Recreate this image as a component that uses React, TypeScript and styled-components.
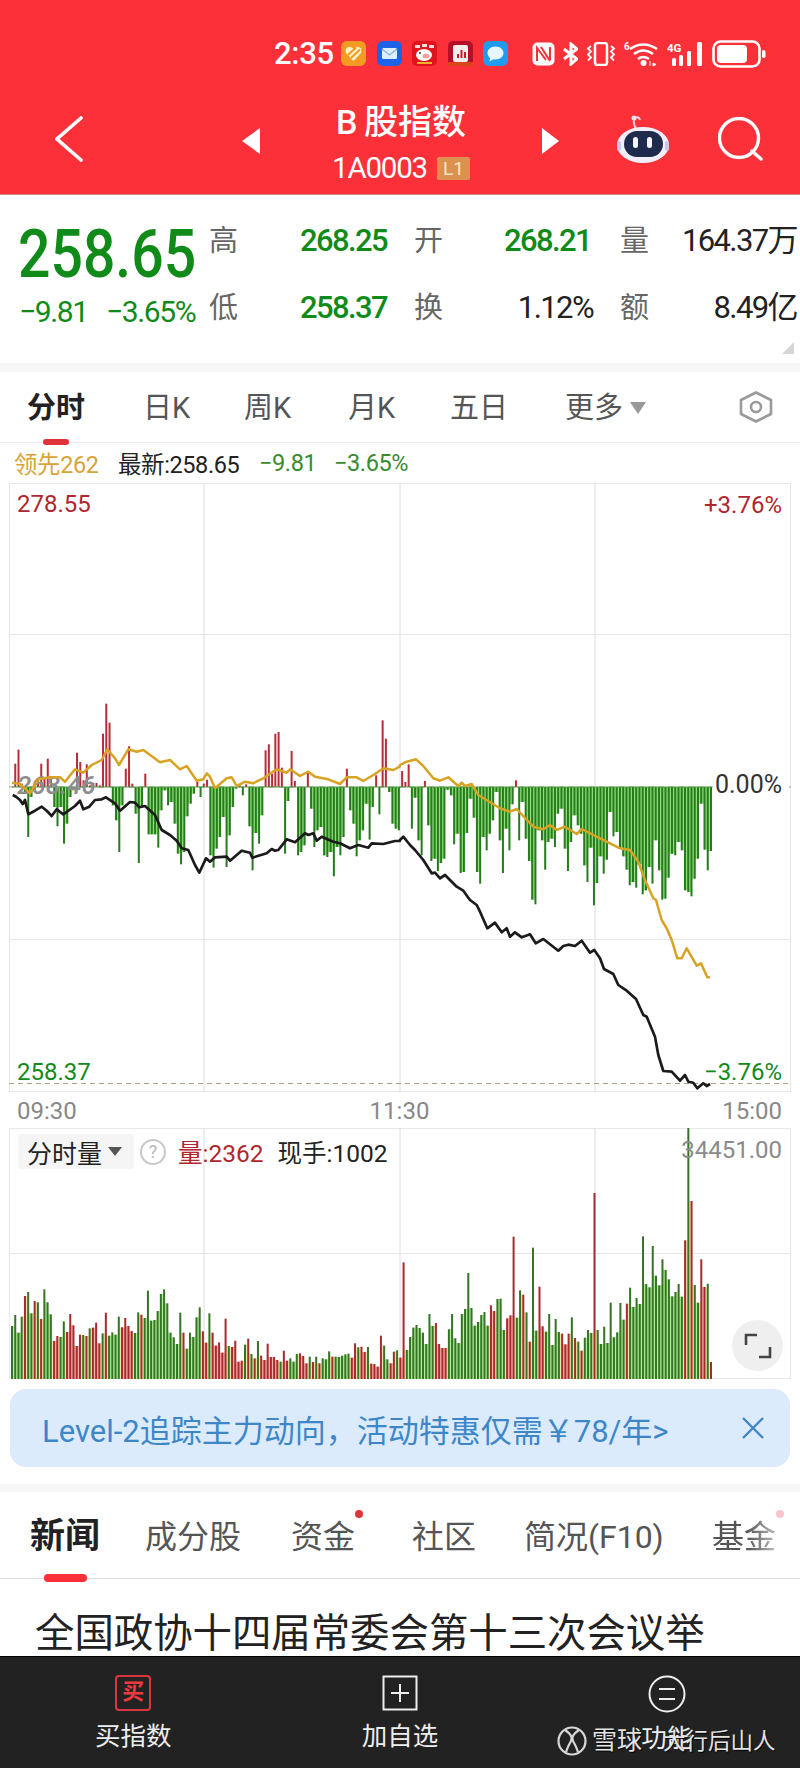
import React from "react";
import styled, { createGlobalStyle } from "styled-components";

const Global = createGlobalStyle`
  html, body { margin: 0; padding: 0; background: #fff; }
  * { box-sizing: border-box; }
  body { font-family: Roboto, "Noto Sans CJK SC", sans-serif; }
`;

const RED = "#fb3038";
const GREEN = "#108a18";

const Page = styled.div`
  width: 800px; height: 1768px; overflow: hidden; display: flex; flex-direction: column; background: #fff; position: relative;
`;
const Header = styled.header`
  height: 195px; background: ${RED}; border-bottom: 1px solid #d9868a; display: flex; flex-direction: column; flex: none;
`;
const StatusBar = styled.div`
  height: 39px; margin-top: 34px; display: flex; align-items: center; padding-left: 274px; color: #fff; flex: none;
`;
const Time = styled.span`
  font-size: 31px; width: 67px; line-height: 28px; letter-spacing: -0.3px; font-weight: 500;
`;
const AppIcons = styled.div`
  display: flex; gap: 10.5px; width: 191px;
`;
const SysIcons = styled.div`
  display: flex; align-items: center; gap: 8px;
`;
const NavRow = styled.div`
  display: flex; align-items: center; padding-left: 55px; margin-top: 24px; height: 90px; color: #fff; flex: none;
`;
const Arrow = styled.div<{ $dir: "l" | "r" }>`
  width: 0; height: 0; border-top: 13px solid transparent; border-bottom: 13px solid transparent;
  ${p => (p.$dir === "l" ? "border-right: 18px solid #fff; margin-left: 159px;" : "border-left: 17px solid #fff;")}
  margin-top: -2px; flex: none;
`;
const TitleBox = styled.div`
  width: 282px; display: flex; flex-direction: column; align-items: center;
`;
const Title = styled.div`
  font-size: 34px; line-height: 40px; font-weight: 500; word-spacing: -2px;
`;
const CodeRow = styled.div`
  display: flex; align-items: center; gap: 10px; margin-top: 12px; font-size: 29.5px; line-height: 28px; letter-spacing: -1.2px;
`;
const LevelBadge = styled.span`
  width: 33px; height: 23px; background: #dc9150; color: #f8e6c8; font-size: 19px; line-height: 23px; text-align: center; border-radius: 2px; letter-spacing: 0;
`;
const Quote = styled.section`
  height: 168px; padding: 16px 3px 0 19px; display: grid; flex: none; position: relative;
  grid-template-columns: 190px 30px 175px 30px 176px 30px 147px; grid-template-rows: 60px 60px; row-gap: 7px;
`;
const PriceCol = styled.div`
  grid-row: 1 / 3; display: flex; flex-direction: column; margin-top: 14px;
`;
const BigPrice = styled.div`
  font-size: 66px; line-height: 60px; font-weight: 500; color: ${GREEN}; transform: scaleX(0.865); transform-origin: 0 50%; white-space: nowrap; margin-left: -1px;
`;
const Changes = styled.div`
  display: flex; margin-top: 12px; font-size: 30px; line-height: 30px; color: ${GREEN}; letter-spacing: -1.4px; white-space: nowrap;
  span:first-child { width: 87px; }
`;
const QLabel = styled.div`
  font-size: 29px; color: #666; display: flex; align-items: center; line-height: 60px;
`;
const QValue = styled.div<{ $dark?: boolean; $pad?: number }>`
  font-size: 31px; font-weight: ${p => (p.$dark ? 400 : 500)}; color: ${p => (p.$dark ? "#222" : GREEN)}; text-align: right; line-height: 60px;
  padding-right: ${p => p.$pad ?? 0}px; letter-spacing: -1.6px; white-space: nowrap;
`;
const Corner = styled.div`
  position: absolute; right: 6px; bottom: 9px; width: 0; height: 0;
  border-left: 12px solid transparent; border-bottom: 12px solid #d5d5d5;
`;
const Gap = styled.div`
  height: 9px; background: #f7f7f7; flex: none;
`;
const PeriodTabs = styled.nav`
  height: 71px; border-bottom: 1px solid #ececec; display: grid; flex: none; align-items: center; position: relative; padding-left: 27px;
  grid-template-columns: 116px 101px 104px 102px 115px 174px 40px;
`;
const PeriodTab = styled.div<{ $active?: boolean }>`
  font-size: 29px; line-height: 40px; color: ${p => (p.$active ? "#222" : "#555")}; font-weight: ${p => (p.$active ? 700 : 400)};
  justify-self: start; position: relative; margin-top: 2px; display: flex; align-items: center; white-space: nowrap;
  ${p => p.$active ? `&::after { content: ""; position: absolute; left: 16px; right: 16px; bottom: -17px; height: 6px; border-radius: 3px; background: #e0343c; }` : ""}
`;
const Caret = styled.i`
  width: 0; height: 0; border-left: 8px solid transparent; border-right: 8px solid transparent; border-top: 12px solid #999; margin-left: 7px;
`;
const Legend = styled.div`
  height: 40px; display: flex; align-items: center; padding-left: 14px; font-size: 23.5px; flex: none; letter-spacing: -0.4px; white-space: nowrap;
`;
const LegendItem = styled.span<{ $c: string; $w: number }>`
  color: ${p => p.$c}; width: ${p => p.$w}px;
`;
const ChartPanel = styled.div<{ $h: number }>`
  position: relative; width: 782px; height: ${p => p.$h}px; margin-left: 9px; flex: none;
  svg { display: block; }
`;
const ChartLabel = styled.span<{ $c: string; $top: number; $left?: number; $right?: number; $bg?: boolean }>`
  position: absolute; top: ${p => p.$top}px; font-size: ${p => (p.$bg ? 25 : 24)}px; line-height: 26px; color: ${p => p.$c};
  ${p => (p.$left !== undefined ? `left: ${p.$left}px;` : "")}
  ${p => (p.$right !== undefined ? `right: ${p.$right}px;` : "")}
  ${p => (p.$bg ? "background: #fff; padding: 0 2px;" : "")}
`;
const TimeAxis = styled.div`
  height: 36px; display: flex; justify-content: space-between; align-items: center; padding: 2px 18px 0 17px; color: #888; font-size: 24px; flex: none;
`;
const VolHead = styled.div`
  position: absolute; left: 9px; top: 6px; display: flex; align-items: center; font-size: 25px; color: #222; white-space: nowrap;
`;
const Chip = styled.div`
  width: 116px; height: 35px; background: #f5f5f5; border-radius: 4px; display: flex; align-items: center; padding-left: 9px;
  i { width: 0; height: 0; margin-left: 6px; border-left: 7px solid transparent; border-right: 7px solid transparent; border-top: 9px solid #555; }
`;
const Help = styled.div`
  width: 26px; height: 26px; border-radius: 50%; border: 2px solid #c8c8c8; color: #b5b5b5; font-size: 18px; line-height: 22px; text-align: center; margin: 0 12px 0 6px;
`;
const VolStat = styled.span<{ $c: string }>`
  color: ${p => p.$c}; font-size: 24.5px; margin-right: 14px;
`;
const Fullscreen = styled.div`
  position: absolute; left: 723px; top: 192px; width: 51px; height: 51px; border-radius: 50%; background: #efefef;
  display: flex; align-items: center; justify-content: center;
`;
const Banner = styled.div`
  margin: 10px 10px 0; height: 78px; border-radius: 16px; background: #dcebfb; color: #3d87c9; display: flex; align-items: center;
  justify-content: space-between; padding: 0 25px 0 32px; font-size: 31px; flex: none; white-space: nowrap;
`;
const Gap2 = styled(Gap)`
  margin-top: 17px; height: 8px;
`;
const NewsTabs = styled.nav`
  height: 87px; border-bottom: 1px solid #ddd; display: grid; align-items: center; flex: none; padding-left: 30px;
  grid-template-columns: 115px 146px 121px 112px 188px 80px;
`;
const NewsTab = styled.div<{ $active?: boolean; $dot?: "red" | "pink" }>`
  position: relative; justify-self: start; white-space: nowrap; font-size: ${p => (p.$active ? 35 : 32)}px; font-weight: ${p => (p.$active ? 700 : 400)};
  color: ${p => (p.$active ? "#222" : "#555")}; line-height: 44px; margin-top: 4px;
  ${p => p.$active ? `&::after { content: ""; position: absolute; left: 14px; right: 13px; bottom: -23px; height: 8px; border-radius: 4px; background: ${RED}; }` : ""}
  ${p => p.$dot ? `&::before { content: ""; position: absolute; right: -8px; top: -5px; width: 8px; height: 8px; border-radius: 50%; background: ${p.$dot === "red" ? "#e0343c" : "#f6c6cc"}; }` : ""}
`;
const FadeText = styled.span`
  display: block; -webkit-mask-image: linear-gradient(90deg, #000 55%, rgba(0,0,0,.4)); mask-image: linear-gradient(90deg, #000 55%, rgba(0,0,0,.4));
`;
const Headline = styled.h1`
  margin: 0; height: 77px; padding: 31px 0 0 35px; font-size: 39.4px; line-height: 48px; font-weight: 400; color: #222; white-space: nowrap; overflow: hidden; flex: none;
`;
const BottomBar = styled.footer`
  flex: 1; background: #222; border-top: 1px solid #000; display: grid; grid-template-columns: repeat(3, 1fr); position: relative;
`;
const BarItem = styled.div`
  display: flex; flex-direction: column; align-items: center; padding-top: 18px; color: #eee; font-size: 25.5px; line-height: 34px;
  span { margin-top: 8px; }
`;
const BuyIcon = styled.div`
  width: 36px; height: 36px; border: 2.5px solid #d8383c; border-radius: 4px; color: #f0383f; font-size: 22px; font-weight: 700; line-height: 30px; text-align: center;
`;
const Watermark = styled.div`
  position: absolute; left: 557px; top: 68px; display: flex; align-items: center; color: #e4e4e4; font-size: 22.5px; line-height: 32px; text-shadow: 1px 1px 1px #000;
  svg { margin-right: 5px; }
  b { font-weight: 400; font-size: 25px; margin-right: 21px; }
`;

function pts(s: string, ox: number, oy: number): string {
  return s.trim().split(/\s+/).map(p => {
    const [a, b] = p.split(",").map(Number);
    return `${(ox + a / 3).toFixed(1)},${(oy + b / 3).toFixed(1)}`;
  }).join(" ");
}

const BLACK = [
  pts("38,345 48,350 60,360 68,372 75,360 85,403 105,392 125,380 140,392 155,408 170,388 190,403 225,378 240,362 250,388 268,380 285,360 305,358 318,352 345,370 360,392 390,366 405,368 418,382 435,378 465,405 485,450 510,465 530,482 545,505 565,510 585,555 598,578 618,535 630,545 645,532 680,530 690,542 725,512 750,518 757,533 800,520 815,507 825,512 835,510 860,478 885,487 915,460 925,465 940,460 950,482 965,470 1000,485 1020,490 1050,505 1075,495 1105,503 1115,490 1150,492 1185,483 1199,483", 0, 680),
  pts("0,480 10,470 30,495 45,510 70,540 95,580 105,578 120,595 135,585 170,620 190,632 210,660 230,675", 400, 680),
  pts("240,35 262,85 285,68 305,97 320,85 330,110 345,97 365,112 378,107 390,103 407,130 430,117 475,152 490,138 505,134 525,138 545,122 570,158 583,150 600,175 612,207 640,222 655,255 680,272 708,297 730,345 740,350 765,410 775,465 790,513 815,515 840,542 855,525 865,545 880,548 892,565 910,550 920,558 930,552", 400, 900),
].join(" ");

const YELLOW = [
  pts("36,308 60,312 90,340 115,298 150,292 180,292 195,305 225,268 250,278 275,255 305,240 322,208 345,235 357,255 385,208 410,215 430,210 480,247 510,240 540,268 560,258 590,302 610,298 620,280 630,290 645,325 680,295 695,292 710,318 735,305 760,310 775,302 790,295 830,268 860,278 870,268 900,288 925,275 945,290 985,298 1020,312 1040,292 1070,292 1090,303 1120,285 1150,265 1180,270 1199,260", 0, 680),
  pts("0,255 20,245 48,238 70,258 100,295 120,302 145,292 175,318 185,308 195,318 215,312 235,345 300,385 330,395 350,387 400,440 430,448 450,435 470,450 495,440 530,462 545,447 600,475 630,490 660,505 690,510 715,545 735,600 760,655", 400, 680),
  pts("768,0 785,60 800,85 815,120 832,175 845,175 860,145 890,197 903,190 922,232 930,232", 400, 900),
].join(" ");

const MACD = [0,70,112,10,-20,-150,-30,-10,20,70,25,85,25,-60,-118,-60,-170,-110,-30,-10,103,75,20,68,5,12,12,5,160,250,193,-55,-100,-195,-55,55,122,10,-80,-228,-60,40,-142,-142,-142,-182,-70,-10,-55,-45,-110,-200,-232,-195,-88,-50,-20,15,-30,10,22,-205,-242,-185,-150,-90,-240,-145,-60,-5,5,-25,8,-118,-250,-138,-170,-85,110,128,40,160,165,58,-200,-42,108,18,-205,-195,-175,45,-65,-180,-130,-120,-205,-210,-195,-268,-180,-205,-150,55,-70,-110,-208,-160,-130,-50,-158,-60,35,-82,200,145,-15,-110,-125,-130,48,15,68,-125,-32,-160,-205,18,-115,-222,-215,-252,-228,-215,-8,-25,-172,-140,-258,-255,-138,-35,-92,-255,-290,-150,-190,-140,-100,-15,-160,-258,-125,-190,-52,20,-160,-45,-155,-222,-338,-352,-130,-160,-248,-165,-155,-180,-80,-65,-185,-252,-165,-85,-115,-140,-235,-285,-182,-355,-288,-208,-260,-218,-75,-148,-135,-180,-208,-248,-295,-285,-302,-232,-322,-310,-240,-290,-160,-250,-338,-335,-272,-200,-205,-165,-190,-310,-315,-328,-275,-215,-50,-188,-250,-192];

const VOL_RAW = "678g 645g 698g 650g 588r 576g 640g 603r 607g 657r 568g 607g 643g 723r 708r 711g 664g 696r 642r 676r 738r 704r 705g 708r 685g 683r 668r 730r 700g 638r 707g 697g 704g 650g 682r 654r 678r 693r 699g 637g 644r 654g 572g 662g 660g 633g 582g 568g 610g 698g 712g 732g 638g 698r 746g 698g 711g 652g 622g 694r 728r 640g 698r 737r 727r 758r 656r 738g 741r 722r 785r 782r 734g 716r 762g 775r 723g 767r 780r 731r 771r 771r 780r 785g 752r 782r 775g 785g 762g 760r 768r 790r 770g 786r 770g 790r 775g 778g 754g 770r 770g 771g 767g 763g 761g 773r 730r 742g 740r 756r 741g 791r 792r 800r 707r 737g 778g 790r 755r 751g 773r 487r 750g 711g 683g 675g 684g 698g 732g 642g 678g 669r 732r 744r 744r 688g 642g 715g 729g 642g 627g 519g 624g 677g 666g 645g 636g 677g 616r 633r 597g 596g 690g 655r 646r 410r 653g 571g 584r 637g 725r 443g 692g 560r 679r 695g 642g 735g 657g 696g 701r 733r 701r 652g 714r 725g 752r 713g 690g 699g 279r 690g 732g 680g 729g 608g 712g 697g 609g 659g 611r 563g 621g 594g 612g 409g 552g 562g 438g 527g 556g 478g 510g 538g 589g 576g 552g 590g 421r 84g 303r 555g 608g 478r 561r 551g 786r";
const VOL = VOL_RAW.split(" ").map(s => ({ top: 1100 + parseInt(s) / 3, up: s.endsWith("r") }));

const X0 = 12;
const X1 = 711;
const Y0 = 787;

const MainChart = () => {
  const pitch = (X1 - X0) / (MACD.length - 1);
  return (
    <svg width={782} height={609} viewBox="9 483 782 609">
      <rect x={9.5} y={483.5} width={781} height={608} fill="none" stroke="#e6e6e6" />
      {[204, 400, 595].map(x => <line key={x} x1={x} x2={x} y1={483} y2={1092} stroke="#dcdcdc" />)}
      {[634.5, 939.5].map(y => <line key={y} x1={9} x2={791} y1={y} y2={y} stroke="#e6e6e6" />)}
      <line x1={9} x2={791} y1={Y0} y2={Y0} stroke="#999" strokeDasharray="5 5" />
      <line x1={9} x2={791} y1={1083.5} y2={1083.5} stroke="#b59a7c" strokeDasharray="5 4" />
      {MACD.slice(0, -1).map((v, i) => {
        const n = MACD[i + 1];
        if (v >= 0 || n >= 0) return null;
        const h = Math.min(-v, -n) / 3;
        return <rect key={i} x={X0 + i * pitch} y={Y0} width={pitch} height={h} fill="#8fe078" />;
      })}
      {MACD.map((v, i) => {
        const h = Math.abs(v) / 3;
        return <rect key={i} x={X0 + i * pitch - 1} y={v > 0 ? Y0 - h : Y0} width={2} height={h} fill={v > 0 ? "#b82c3a" : "#277a1e"} />;
      })}
      <line x1={X0} x2={X1} y1={Y0} y2={Y0} stroke="#4d9a3c" />
      <text x={17} y={794} fontSize={26} fontWeight={500} fill="#8d8d8d" fontStyle="italic" fontFamily="Roboto, sans-serif">268.46</text>
      <polyline points={BLACK} fill="none" stroke="#1b1b1b" strokeWidth={2.7} strokeLinejoin="round" />
      <polyline points={YELLOW} fill="none" stroke="#d8a222" strokeWidth={2.5} strokeLinejoin="round" />
    </svg>
  );
};

const VolumeChart = () => {
  const pitch = (X1 - X0) / (VOL.length - 1);
  const base = 1379;
  return (
    <svg width={782} height={251} viewBox="9 1128 782 251">
      <rect x={9.5} y={1128.5} width={781} height={250} fill="none" stroke="#e8e8e8" />
      {[204, 400, 595].map(x => <line key={x} x1={x} x2={x} y1={1128} y2={1379} stroke="#dcdcdc" />)}
      <line x1={9} x2={791} y1={1253.5} y2={1253.5} stroke="#e6e6e6" />
      {VOL.slice(0, -1).map((b, i) => {
        const n = VOL[i + 1];
        const top = Math.max(b.top, n.top);
        const fill = b.up && n.up ? "#f8b4ac" : !b.up && !n.up ? "#b2f096" : "#efe8a8";
        return <rect key={i} x={X0 + i * pitch} y={top} width={pitch} height={base - top} fill={fill} />;
      })}
      {VOL.map((b, i) => (
        <rect key={i} x={X0 + i * pitch - 1} y={b.top} width={2} height={base - b.top} fill={b.up ? "#a62a2e" : "#357426"} />
      ))}
    </svg>
  );
};

const Heart = () => (
  <svg width={25} height={25} viewBox="0 0 25 25"><rect width={25} height={25} rx={6} fill="#f59a23" />
    <path d="M12.5 20 L5 12 Q3.5 6.5 8 6 Q11 5.5 12.5 8 Q14 5.5 17 6 Q21.5 6.5 20 12 Z" fill="#fff3c8" />
    <path d="M7 14 L15 6.5 M10 17 L19 8.5" stroke="#f59a23" strokeWidth={2} /></svg>
);
const Mail = () => (
  <svg width={25} height={25} viewBox="0 0 25 25"><rect width={25} height={25} rx={6} fill="#1d63e8" />
    <rect x={5} y={7} width={15} height={11} rx={1.5} fill="#dfeeff" /><path d="M5 8 L12.5 14 L20 8" fill="none" stroke="#7eb0f5" strokeWidth={1.2} /></svg>
);
const Cartoon = () => (
  <svg width={25} height={25} viewBox="0 0 25 25"><rect width={25} height={25} rx={5} fill="#e0141c" />
    <path d="M3 4h5v3H3zM10 3h5v3h-5zM17 4h5v3h-5z" fill="#fff" opacity=".85" />
    <ellipse cx={12} cy={14} rx={8} ry={6} fill="#fff" /><ellipse cx={14} cy={15} rx={3.5} ry={2.5} fill="#f2a0a0" />
    <circle cx={8} cy={12} r={1} fill="#333" /><path d="M5 21h15v2H5z" fill="#f8b030" /></svg>
);
const Notebook = () => (
  <svg width={25} height={25} viewBox="0 0 25 25"><rect width={25} height={25} rx={5} fill="#b5102a" />
    <rect x={5} y={4} width={15} height={17} rx={2} fill="#fff" opacity=".92" />
    <path d="M9 17v-4h2v4zM12.5 17v-8h2v8zM16 17v-6h2v6z" fill="#c01f2a" /><rect y={21} width={25} height={4} fill="#d8451c" /></svg>
);
const Bubble = () => (
  <svg width={25} height={25} viewBox="0 0 25 25"><rect width={25} height={25} rx={6} fill="#1f9bf0" />
    <path d="M12.5 5.5c4.5 0 8 2.900 8 6.500s-3.500 6.500-8 6.500c-.8 0-1.500-.1-2.200-.2L6.500 20.500l.6-3.500C5.500 15.800 4.500 14 4.500 12c0-3.600 3.500-6.500 8-6.500z" fill="#e8f6ff" /></svg>
);
const Nfc = () => (
  <svg width={23} height={24} viewBox="0 0 23 24"><rect x={0.5} y={0.5} width={22} height={23} rx={5} fill="#fff" />
    <path d="M5 19V6l9 12M18 5v13M9 5l9 14" fill="none" stroke={RED} strokeWidth={2} /></svg>
);
const Bt = () => (
  <svg width={15} height={24} viewBox="0 0 15 24" fill="none" stroke="#fff" strokeWidth={3}><path d="M1 7l13 10-6 5V2l6 5L1 17" /></svg>
);
const Vibrate = () => (
  <svg width={30} height={24} viewBox="0 0 30 24" fill="none" stroke="#fff" strokeWidth={2}><rect x={9} y={1} width={12} height={22} rx={2.500} strokeWidth={2.500} />
    <path d="M5 4l-3 2.500 3 3-3 3 3 3-3 3M25 4l3 2.500-3 3 3 3-3 3 3 3" strokeWidth={1.800} /></svg>
);
const Wifi = () => (
  <svg width={35} height={26} viewBox="0 0 35 26" fill="none" stroke="#fff" strokeWidth={2.600}>
    <path d="M6 8Q19-1 33 8M10 13Q19 6 29 13M14 18Q19 14 25 18" />
    <circle cx={19.500} cy={22} r={3} fill="#fff" stroke="none" />
    <path d="M26 20v5M29 22l3 1.500-3 1.500z" strokeWidth={1} fill="#fff" />
    <text x={0} y={9} fontSize={10} fontWeight={700} fill="#fff" stroke="none" fontFamily="Roboto, sans-serif">6</text></svg>
);
const Signal = () => (
  <svg width={37} height={26} viewBox="0 0 37 26" fill="#fff">
    <text x={0} y={11} fontSize={11.500} fontWeight={700} fontFamily="Roboto, sans-serif">4G</text>
    <rect x={5} y={17} width={4} height={8} rx={1.500} /><rect x={12} y={14} width={4} height={11} rx={1.500} /><rect x={20} y={10} width={4} height={15} rx={1.500} /><rect x={30} y={1} width={5} height={24} rx={1.500} /></svg>
);
const Battery = () => (
  <svg width={54} height={28} viewBox="0 0 54 28"><rect x={1.500} y={1.500} width={46} height={25} rx={7} fill="none" stroke="#fff" strokeWidth={2.600} />
    <rect x={5} y={5} width={30} height={18} rx={4} fill="#fff" /><rect x={50} y={10} width={3.500} height={8} rx={1.700} fill="#fff" /></svg>
);
const Robot = () => (
  <svg width={53} height={48} viewBox="0 0 53 48" style={{ flex: "none", marginTop: -6 }}>
    <path d="M20 14Q16 6 19 3Q23 1 24 5" fill="none" stroke="#f0d8e8" strokeWidth={2} />
    <circle cx={18} cy={3} r={2.500} fill="#f3dfe6" />
    <ellipse cx={27} cy={30} rx={26} ry={18} fill="#f2eefc" />
    <rect x={1} y={26} width={4} height={10} rx={2} fill="#cfc6ec" /><rect x={49} y={26} width={4} height={10} rx={2} fill="#cfc6ec" />
    <rect x={8} y={16} width={39} height={26} rx={13} fill="#1f2b4d" />
    <rect x={17} y={22} width={5} height={11} rx={2.500} fill="#f4f6ff" /><rect x={31} y={22} width={5} height={11} rx={2.500} fill="#f4f6ff" />
  </svg>
);
const Search = () => (
  <svg width={46} height={44} viewBox="0 0 46 44" fill="none" stroke="#fff" strokeWidth={3.400} strokeLinecap="round" style={{ flex: "none", marginLeft: 49, marginTop: -6 }}>
    <circle cx={21} cy={21} r={19.500} /><path d="M34 34l9 8" /></svg>
);
const Back = () => (
  <svg width={28} height={46} viewBox="0 0 28 46" fill="none" stroke="#fff" strokeWidth={3.600} strokeLinecap="round" style={{ flex: "none", marginTop: -6 }}>
    <path d="M26 2L2 23l24 21" /></svg>
);
const Hex = () => (
  <svg width={34} height={32} viewBox="0 0 34 32" fill="none" stroke="#9a9a9a" strokeWidth={2.600} strokeLinejoin="round">
    <path d="M17 1.500L32 9v14l-15 7.500L2 23V9z" /><circle cx={17} cy={16} r={5} /></svg>
);

export default function App() {
  return (
    <Page>
      <Global />
      <Header>
        <StatusBar>
          <Time>2:35</Time>
          <AppIcons><Heart /><Mail /><Cartoon /><Notebook /><Bubble /></AppIcons>
          <SysIcons><Nfc /><Bt /><Vibrate /><Wifi /><Signal /><Battery /></SysIcons>
        </StatusBar>
        <NavRow>
          <Back />
          <Arrow $dir="l" />
          <TitleBox>
            <Title>B 股指数</Title>
            <CodeRow>1A0003 <LevelBadge>L1</LevelBadge></CodeRow>
          </TitleBox>
          <Arrow $dir="r" />
          <div style={{ width: 57, flex: "none" }} />
          <Robot />
          <Search />
        </NavRow>
      </Header>
      <Quote>
        <PriceCol>
          <BigPrice>258.65</BigPrice>
          <Changes><span>−9.81</span><span>−3.65%</span></Changes>
        </PriceCol>
        <QLabel>高</QLabel><QValue $pad={27}>268.25</QValue>
        <QLabel>开</QLabel><QValue $pad={29}>268.21</QValue>
        <QLabel>量</QLabel><QValue $dark>164.37万</QValue>
        <QLabel>低</QLabel><QValue $pad={27}>258.37</QValue>
        <QLabel>换</QLabel><QValue $dark $pad={27}>1.12%</QValue>
        <QLabel>额</QLabel><QValue $dark>8.49亿</QValue>
        <Corner />
      </Quote>
      <Gap />
      <PeriodTabs>
        <PeriodTab $active>分时</PeriodTab>
        <PeriodTab>日K</PeriodTab>
        <PeriodTab>周K</PeriodTab>
        <PeriodTab>月K</PeriodTab>
        <PeriodTab>五日</PeriodTab>
        <PeriodTab>更多<Caret /></PeriodTab>
        <Hex />
      </PeriodTabs>
      <Legend>
        <LegendItem $c="#d9a437" $w={104}>领先262</LegendItem>
        <LegendItem $c="#222" $w={141}>最新:258.65</LegendItem>
        <LegendItem $c="#3b8a2e" $w={75}>−9.81</LegendItem>
        <LegendItem $c="#3b8a2e" $w={80}>−3.65%</LegendItem>
      </Legend>
      <ChartPanel $h={609}>
        <MainChart />
        <ChartLabel $c="#b0262e" $top={8} $left={8}>278.55</ChartLabel>
        <ChartLabel $c="#b0262e" $top={9} $right={9}>+3.76%</ChartLabel>
        <ChartLabel $c="#333" $top={289} $right={7} $bg>0.00%</ChartLabel>
        <ChartLabel $c={GREEN} $top={576} $left={8}>258.37</ChartLabel>
        <ChartLabel $c={GREEN} $top={576} $right={9}>−3.76%</ChartLabel>
      </ChartPanel>
      <TimeAxis><span>09:30</span><span>11:30</span><span>15:00</span></TimeAxis>
      <ChartPanel $h={251}>
        <VolumeChart />
        <VolHead>
          <Chip>分时量<i /></Chip>
          <Help>?</Help>
          <VolStat $c="#b0262e">量:2362</VolStat>
          <VolStat $c="#222">现手:1002</VolStat>
        </VolHead>
        <ChartLabel $c="#8a8a8a" $top={9} $right={9}>34451.00</ChartLabel>
        <Fullscreen>
          <svg width={28} height={28} viewBox="0 0 28 28" fill="none" stroke="#444" strokeWidth={2.600}>
            <path d="M2 13V3h11M26 15v10H15" /></svg>
        </Fullscreen>
      </ChartPanel>
      <Banner>
        <span>Level-2追踪主力动向，活动特惠仅需￥78/年&gt;</span>
        <svg width={24} height={24} viewBox="0 0 24 24" stroke="#3d87c9" strokeWidth={2.400} fill="none"><path d="M2 2l20 20M22 2L2 22" /></svg>
      </Banner>
      <Gap2 />
      <NewsTabs>
        <NewsTab $active>新闻</NewsTab>
        <NewsTab>成分股</NewsTab>
        <NewsTab $dot="red">资金</NewsTab>
        <NewsTab>社区</NewsTab>
        <NewsTab>简况(F10)</NewsTab>
        <NewsTab $dot="pink"><FadeText>基金</FadeText></NewsTab>
      </NewsTabs>
      <Headline>全国政协十四届常委会第十三次会议举</Headline>
      <BottomBar>
        <BarItem><BuyIcon>买</BuyIcon><span>买指数</span></BarItem>
        <BarItem>
          <svg width={36} height={36} viewBox="0 0 36 36" fill="none" stroke="#eee" strokeWidth={2}><rect x={1.500} y={1.500} width={33} height={33} /><path d="M18 9v18M9 18h18" /></svg>
          <span>加自选</span>
        </BarItem>
        <BarItem>
          <svg width={38} height={38} viewBox="0 0 38 38" fill="none" stroke="#eee" strokeWidth={2}><circle cx={19} cy={19} r={17.500} /><path d="M11 14h16M11 24h16" /></svg>
          <span>功能</span>
        </BarItem>
        <Watermark>
          <svg width={30} height={30} viewBox="0 0 30 30" fill="none" stroke="#d8d8d8" strokeWidth={2.200}>
            <circle cx={15} cy={15} r={13.500} /><path d="M8 4Q17 10 14 15T9 26M22 4Q13 10 16 15T21 26" /></svg>
          <b>雪球</b>大行后山人
        </Watermark>
      </BottomBar>
    </Page>
  );
}
